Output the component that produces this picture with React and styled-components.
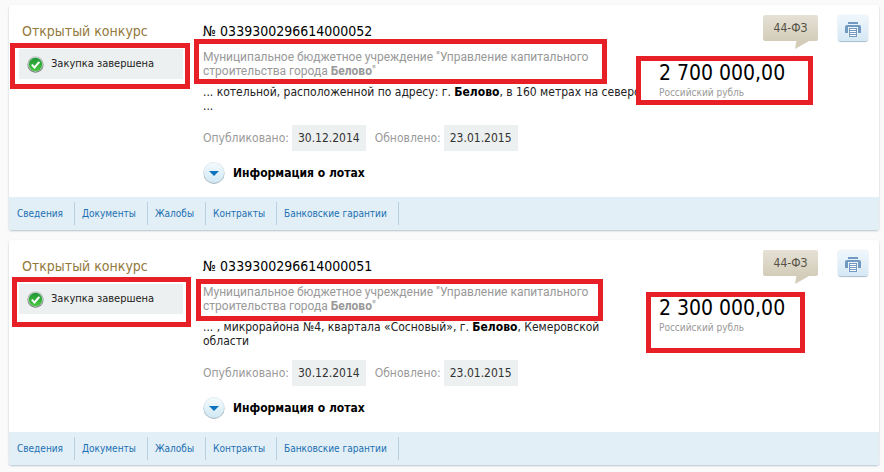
import styled, { createGlobalStyle } from "styled-components";

const GlobalStyle = createGlobalStyle`
  * {
    box-sizing: border-box;
  }
  body {
    margin: 0;
    background-color: #fafafa;
    color: #000;
    font-family: Tahoma, "DejaVu Sans Condensed", "Noto Sans", sans-serif;
    font-size: 12px;
    line-height: 14px;
  }
`;

const Page = styled.main`
  display: flex;
  flex-direction: column;
  gap: 10px;
  padding: 5px 5px 7px 9px;
`;

const Card = styled.article`
  background-color: #fff;
  border-radius: 3px;
  box-shadow: 0 1px 2px #b4c3cc;
`;

const CardBody = styled.div`
  display: grid;
  grid-template-columns: 164px minmax(0, 1fr) 209px;
  padding: 10px 11px 13px 10px;
`;

const TypeColumn = styled.div`
  padding-top: 5px;
`;

const TypeName = styled.div`
  padding-left: 3px;
  margin-bottom: 7px;
  color: #93793b;
  font-size: 14px;
  line-height: 22px;
  white-space: nowrap;
`;

const Status = styled.div`
  position: relative;
  display: flex;
  align-items: center;
  gap: 7px;
  height: 30px;
  padding-left: 8px;
  background-color: #edf0f0;
  color: #222;
  font-size: 11px;
  white-space: nowrap;
`;

const MainColumn = styled.div`
  padding: 5px 16px 0 20px;
`;

const Number = styled.h2`
  margin: 0 0 8px;
  font-size: 14px;
  font-weight: 400;
  line-height: 22px;
`;

const Buyer = styled.div`
  position: relative;
  max-width: 400px;
  margin-bottom: 7px;
  color: #999;
  font-family: Roboto, sans-serif;
  white-space: nowrap;
`;

const Description = styled.p`
  height: 28px;
  margin: 0 0 12px;
  overflow: hidden;
  color: #222;
  white-space: nowrap;
  b {
    color: #000;
  }
`;

const Dates = styled.dl`
  display: flex;
  align-items: center;
  margin: 0 0 11px;
`;

const DateLabel = styled.dt`
  margin-right: 3px;
  color: #999;
`;

const DateValue = styled.dd`
  margin: 0 9px 0 0;
  padding: 6px;
  background-color: #edf0f0;
  color: #333;
`;

const LotsButton = styled.button`
  display: flex;
  align-items: center;
  gap: 8px;
  padding: 0;
  border: 0;
  background: none;
  color: #000;
  font: inherit;
  font-weight: 700;
  cursor: pointer;
`;

const SideColumn = styled.div`
  display: flex;
  flex-direction: column;
  gap: 20px;
`;

const Actions = styled.div`
  display: flex;
  justify-content: flex-end;
  gap: 20px;
`;

const Law = styled.span`
  position: relative;
  width: 55px;
  height: 26px;
  border-radius: 2px;
  background: linear-gradient(#e5e1d5, #d3ccb9);
  color: #555045;
  line-height: 26px;
  text-align: center;
  &::after {
    content: "";
    position: absolute;
    top: 100%;
    left: 32px;
    width: 14px;
    height: 8px;
    background-color: #d3ccb9;
    clip-path: polygon(10% 0, 100% 0, 0 100%);
  }
`;

const PrintButton = styled.button`
  display: flex;
  align-items: center;
  justify-content: center;
  width: 30px;
  height: 26px;
  padding: 2px 0 0;
  border: 0;
  border-radius: 3px;
  background: linear-gradient(#f0f7fc, #d5e8f5);
  box-shadow: 0 0 1px #b5cbdc, 0 1px 1px #a3b8c8;
  cursor: pointer;
`;

const Price = styled.div`
  position: relative;
`;

const Amount = styled.div`
  font-size: 21px;
  line-height: 24px;
  white-space: nowrap;
`;

const Currency = styled.div`
  color: #999;
  font-size: 10px;
  line-height: 16px;
`;

const CardLinks = styled.nav`
  display: flex;
  padding: 5px 1px;
  border-radius: 0 0 3px 3px;
  background-color: #e3eff6;
`;

const CardLink = styled.a`
  padding: 0 11px 0 7px;
  border-right: 1px solid #b9cfe0;
  color: #1b6fb3;
  font-size: 10px;
  line-height: 23px;
  text-decoration: none;
`;

const Highlight = styled.span`
  position: absolute;
  inset: ${(props) => props.$inset};
  border: 5px solid #e71f26;
  pointer-events: none;
`;

const CheckIcon = () => (
  <svg width="17" height="17" viewBox="0 0 17 17" aria-hidden="true">
    <defs>
      <linearGradient id="ring" x1="0" y1="0" x2="0" y2="1">
        <stop offset="0" stopColor="#c4caca" />
        <stop offset="1" stopColor="#6f7776" />
      </linearGradient>
      <linearGradient id="ball" x1="0" y1="0" x2="0" y2="1">
        <stop offset="0" stopColor="#1f9636" />
        <stop offset="1" stopColor="#48c83f" />
      </linearGradient>
    </defs>
    <circle cx="8.5" cy="8.5" r="8.2" fill="url(#ring)" />
    <circle cx="8.5" cy="8.5" r="7.2" fill="#d5dfd8" />
    <circle cx="8.5" cy="8.5" r="6.7" fill="url(#ball)" />
    <path d="M4.8 8.6l2.7 2.8 4.8-5.6" fill="none" stroke="#fff" strokeWidth="2" />
  </svg>
);

const ArrowIcon = () => (
  <svg width="22" height="22" viewBox="0 0 22 22" aria-hidden="true">
    <defs>
      <linearGradient id="disc" x1="0" y1="0" x2="0" y2="1">
        <stop offset="0" stopColor="#f5fafd" />
        <stop offset="1" stopColor="#d0e8f4" />
      </linearGradient>
    </defs>
    <circle cx="11" cy="11.4" r="10.5" fill="#9fb0b9" />
    <circle cx="11" cy="10.6" r="10.3" fill="url(#disc)" stroke="#cfdde5" strokeWidth="0.5" />
    <path d="M6 9h10l-5 5z" fill="#0b72c0" />
  </svg>
);

const PrinterIcon = () => (
  <svg width="16" height="16" viewBox="0 0 16 16" aria-hidden="true">
    <path d="M3 1h10v2H3z" fill="#7199c2" />
    <path d="M2 4h12a2 2 0 0 1 2 2v6H0V6a2 2 0 0 1 2-2z" fill="#7199c2" />
    <path d="M3 6h10v10H3z" fill="#eaf3fa" />
    <path d="M4 7h8v9H4z" fill="#7199c2" />
    <path d="M5 8h6v1H5zM5 10h6v1H5zM5 12h6v1H5zM5 14h6v1H5z" fill="#fff" />
  </svg>
);

const links = ["Сведения", "Документы", "Жалобы", "Контракты", "Банковские гарантии"];

const purchases = [
  {
    number: "0339300296614000052",
    description: (
      <>
        ... котельной, расположенной по адресу: г. <b>Белово</b>, в 160 метрах на северо
        <br />
        ...
      </>
    ),
    amount: "2 700 000,00",
    statusInset: "-6px -7px -10px -9px",
    buyerInset: "-11px -4px -6px -9px",
    priceInset: "-5px 55px -4px -23px",
  },
  {
    number: "0339300296614000051",
    description: (
      <>
        ... , микрорайона №4, квартала «Сосновый», г. <b>Белово</b>, Кемеровской
        <br />
        области
      </>
    ),
    amount: "2 300 000,00",
    statusInset: "-7px -8px -13px -7px",
    buyerInset: "-6px 0 -8px -7px",
    priceInset: "-4px 63px -17px -13px",
  },
];

const PurchaseCard = ({ purchase }) => (
  <Card>
    <CardBody>
      <TypeColumn>
        <TypeName>Открытый конкурс</TypeName>
        <Status>
          <CheckIcon />
          Закупка завершена
          <Highlight $inset={purchase.statusInset} />
        </Status>
      </TypeColumn>
      <MainColumn>
        <Number>№ {purchase.number}</Number>
        <Buyer>
          Муниципальное бюджетное учреждение "Управление капитального
          <br />
          строительства города <b>Белово</b>"
          <Highlight $inset={purchase.buyerInset} />
        </Buyer>
        <Description>{purchase.description}</Description>
        <Dates>
          <DateLabel>Опубликовано:</DateLabel>
          <DateValue>30.12.2014</DateValue>
          <DateLabel>Обновлено:</DateLabel>
          <DateValue>23.01.2015</DateValue>
        </Dates>
        <LotsButton type="button">
          <ArrowIcon />
          Информация о лотах
        </LotsButton>
      </MainColumn>
      <SideColumn>
        <Actions>
          <Law>44-ФЗ</Law>
          <PrintButton type="button" aria-label="Печать">
            <PrinterIcon />
          </PrintButton>
        </Actions>
        <Price>
          <Amount>{purchase.amount}</Amount>
          <Currency>Российский рубль</Currency>
          <Highlight $inset={purchase.priceInset} />
        </Price>
      </SideColumn>
    </CardBody>
    <CardLinks>
      {links.map((link) => (
        <CardLink key={link} href="#">
          {link}
        </CardLink>
      ))}
    </CardLinks>
  </Card>
);

export default function App() {
  return (
    <>
      <GlobalStyle />
      <Page>
        {purchases.map((purchase) => (
          <PurchaseCard key={purchase.number} purchase={purchase} />
        ))}
      </Page>
    </>
  );
}
